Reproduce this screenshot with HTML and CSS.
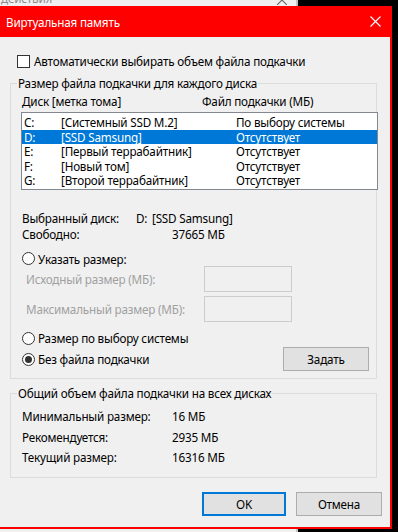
FILE: index.html
```html
<!DOCTYPE html>
<html lang="ru">
<head>
    <meta charset="UTF-8">
    <title>Виртуальная память</title>
    <link rel="stylesheet" href="styles.css">
</head>
<body>
    <div class="desktop">
        <!-- окно позади диалога -->
        <div class="back-window">
            <div class="back-title">действия</div>
            <svg class="back-close" width="10" height="10" viewBox="0 0 10 10">
                <path d="M0 0 L10 10 M10 0 L0 10" stroke="#6b6b6b" stroke-width="1.2" fill="none"/>
            </svg>
        </div>
        <div class="desktop-text">Windows</div>

        <div class="dialog">
            <div class="titlebar">
                <span class="title">Виртуальная память</span>
                <svg class="close" width="11" height="11" viewBox="0 0 11 11">
                    <path d="M0.5 0.5 L10.5 10.5 M10.5 0.5 L0.5 10.5" stroke="#fff" stroke-width="1.1" fill="none"/>
                </svg>
            </div>

            <div class="dialog-body">
                <div class="check-row">
                    <span class="checkbox"></span>
                    <span>Автоматически выбирать объем файла подкачки</span>
                </div>

                <fieldset class="group">
                    <legend>Размер файла подкачки для каждого диска</legend>
                    <div class="list-head">
                        <span>Диск [метка тома]</span>
                        <span>Файл подкачки (МБ)</span>
                    </div>
                    <div class="listbox">
                        <div class="list-row"><span>C:</span><span>[Системный SSD M.2]</span><span>По выбору системы</span></div>
                        <div class="list-row selected"><span>D:</span><span>[SSD Samsung]</span><span>Отсутствует</span></div>
                        <div class="list-row"><span>E:</span><span>[Первый террабайтник]</span><span>Отсутствует</span></div>
                        <div class="list-row"><span>F:</span><span>[Новый том]</span><span>Отсутствует</span></div>
                        <div class="list-row"><span>G:</span><span>[Второй террабайтник]</span><span>Отсутствует</span></div>
                    </div>

                    <div class="info">
                        <div class="info-row"><span>Выбранный диск:</span><span><span class="drive">D:</span>[SSD Samsung]</span></div>
                        <div class="info-row"><span>Свободно:</span><span class="free">37665 МБ</span></div>
                    </div>

                    <div class="radio-row first">
                        <span class="radio"></span>
                        <span>Указать размер:</span>
                    </div>
                    <div class="size-row">
                        <span class="size-label">Исходный размер (МБ):</span>
                        <span class="size-input"></span>
                    </div>
                    <div class="size-row second">
                        <span class="size-label">Максимальный размер (МБ):</span>
                        <span class="size-input"></span>
                    </div>
                    <div class="radio-row system">
                        <span class="radio"></span>
                        <span>Размер по выбору системы</span>
                    </div>
                    <div class="radio-row none">
                        <span class="radio checked"></span>
                        <span>Без файла подкачки</span>
                        <button class="btn set">Задать</button>
                    </div>
                </fieldset>

                <fieldset class="group total">
                    <legend>Общий объем файла подкачки на всех дисках</legend>
                    <div class="total-row"><span>Минимальный размер:</span><span>16 МБ</span></div>
                    <div class="total-row"><span>Рекомендуется:</span><span>2935 МБ</span></div>
                    <div class="total-row"><span>Текущий размер:</span><span>16316 МБ</span></div>
                </fieldset>

                <div class="buttons">
                    <button class="btn ok">OK</button>
                    <button class="btn cancel">Отмена</button>
                </div>
            </div>
        </div>
    </div>
</body>
</html>
```

FILE: styles.css
```css
/* Рабочий стол */
body {
    margin: 0;
    background: #000;
    font-family: "Noto Sans", "Open Sans", sans-serif;
    font-size: 11.7px;
    letter-spacing: -0.2px;
    color: #000;
    overflow: hidden;
}

.desktop {
    position: relative;
    width: 398px;
    height: 532px;
    overflow: hidden;
}

/* Окно позади */
.back-window {
    position: absolute;
    left: 0;
    top: 0;
    width: 296px;
    height: 532px;
    background: #f0f0f0;
    border-right: 2px solid #c4c4c4;
}

.back-title {
    position: absolute;
    left: 1px;
    top: -10px;
    color: #8c8c8c;
}

.back-close {
    position: absolute;
    left: 277px;
    top: -5px;
}

.desktop-text {
    position: absolute;
    left: 301px;
    top: 527px;
    color: #e00000;
    font-weight: bold;
    font-size: 14px;
    text-transform: uppercase;
}

/* Диалог */
.dialog {
    position: absolute;
    left: -2px;
    top: 6px;
    width: 394px;
}

.titlebar {
    height: 31px;
    background: #ff0000;
    display: flex;
    align-items: center;
    padding: 0 11px 0 8px;
}

.title {
    color: #fff;
}

.close {
    margin-left: auto;
}

.dialog-body {
    height: 490px;
    background: #f0f0f0;
    border: 2px solid #ff0000;
    border-top: none;
    overflow: hidden;
}

/* Флажок */
.check-row {
    margin-top: 16px;
    height: 16px;
    padding-left: 17px;
    display: flex;
    align-items: center;
}

.checkbox {
    width: 13px;
    height: 13px;
    box-sizing: border-box;
    border: 1px solid #333;
    background: #fff;
    margin-right: 4px;
}

/* Группы */
.group {
    margin: 6px 0 0 10px;
    width: 367px;
    box-sizing: border-box;
    min-width: 0;
    border: 1px solid #dcdcdc;
    padding: 0 0 7px 11px;
}

.group legend {
    margin-left: -5px;
    padding: 0 1px;
    line-height: 16px;
}

.list-head {
    display: grid;
    grid-template-columns: 180px 1fr;
    line-height: 20px;
    height: 20px;
}

.listbox {
    margin: 1px -2px 0 -1px;
    height: 78px;
    box-sizing: border-box;
    border: 1px solid #828790;
    background: #fff;
    padding-top: 2px;
}

.list-row {
    display: grid;
    grid-template-columns: 37px 175px 1fr;
    height: 14.5px;
    line-height: 14.5px;
    padding-left: 2px;
}

.list-row.selected {
    background: #0078d7;
    color: #fff;
}

.info {
    margin-top: 20px;
}

.info-row {
    display: grid;
    grid-template-columns: 114px 1fr;
    height: 16px;
    line-height: 16px;
}

.drive {
    display: inline-block;
    width: 16px;
}

.free {
    padding-left: 36px;
}

/* Переключатели */
.radio-row {
    display: flex;
    align-items: center;
}

.radio-row.first {
    margin-top: 9px;
    height: 15px;
}

.radio-row.system {
    margin-top: 8px;
    height: 16px;
}

.radio-row.none {
    margin-top: 1px;
    height: 24px;
}

.radio {
    width: 13px;
    height: 13px;
    box-sizing: border-box;
    border: 1px solid #333;
    border-radius: 50%;
    background: #fff;
    margin-right: 3px;
    display: flex;
    align-items: center;
    justify-content: center;
}

.radio.checked::after {
    content: "";
    width: 7px;
    height: 7px;
    border-radius: 50%;
    background: #333;
}

.size-row {
    display: flex;
    align-items: center;
    height: 26px;
}

.size-row.second {
    margin-top: 4px;
}

.size-label {
    width: 182px;
    box-sizing: border-box;
    padding-left: 4px;
    color: #a0a0a0;
}

.size-input {
    width: 88px;
    height: 26px;
    box-sizing: border-box;
    border: 1px solid #cccccc;
    background: #f0f0f0;
}

/* Кнопки */
.btn {
    font-family: inherit;
    font-size: inherit;
    letter-spacing: inherit;
    color: #000;
    background: #e1e1e1;
    border: 1px solid #adadad;
    height: 24px;
    padding: 0;
}

.btn.set {
    width: 86px;
    margin-left: auto;
    margin-right: 7px;
}

.total {
    padding-top: 5px;
    padding-bottom: 9.5px;
}

.total-row {
    display: grid;
    grid-template-columns: 150px 1fr;
    height: 20.5px;
    line-height: 20.5px;
}

.buttons {
    margin-top: 14px;
    display: flex;
    justify-content: flex-end;
    gap: 10px;
    padding-right: 8px;
}

.btn.ok {
    width: 84px;
    border: 2px solid #0078d7;
}

.btn.cancel {
    width: 86px;
}
```
